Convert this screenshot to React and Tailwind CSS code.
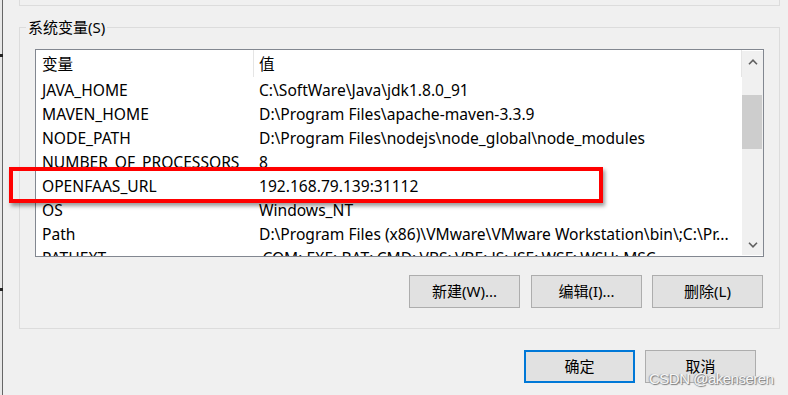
import React from "react";

const rows = [
  ["JAVA_HOME", "C:\\SoftWare\\Java\\jdk1.8.0_91"],
  ["MAVEN_HOME", "D:\\Program Files\\apache-maven-3.3.9"],
  ["NODE_PATH", "D:\\Program Files\\nodejs\\node_global\\node_modules"],
  ["NUMBER_OF_PROCESSORS", "8"],
  ["OPENFAAS_URL", "192.168.79.139:31112"],
  ["OS", "Windows_NT"],
  ["Path", "D:\\Program Files (x86)\\VMware\\VMware Workstation\\bin\\;C:\\Pr..."],
  ["PATHEXT", ".COM;.EXE;.BAT;.CMD;.VBS;.VBE;.JS;.JSE;.WSF;.WSH;.MSC"],
];

function Btn({ children, primary }) {
  return (
    <button
      className={
        "w-[111px] h-[33px] bg-[#e1e1e1] flex items-center justify-center text-[15px] text-black " +
        (primary ? "border-2 border-[#0078d7]" : "border border-[#adadad]")
      }
    >
      {children}
    </button>
  );
}

export default function App() {
  return (
    <div className="relative w-[788px] h-[395px] overflow-hidden bg-[#f0f0f0] font-['Noto_Sans','Noto_Sans_CJK_SC',sans-serif] text-[15px] text-black flex">
      <div className="w-[2px] h-full bg-[#e8e8e8]" />
      <div className="w-[1px] h-full bg-[#666666]" />
      <div className="flex flex-col pl-[16px]">
        <div className="w-[761px] h-[6px] border-x border-b border-[#dcdcdc]" />
        <fieldset className="mt-[11px] w-[761px] h-[312px] border border-[#dcdcdc] p-0 m-0 min-w-0">
          <legend className="ml-[6px] px-[2px] leading-[20px]">系统变量(S)</legend>
          <div className="px-[15px] pt-[12px]">
            <div className="w-[729px] h-[208px] border border-[#828790] bg-white flex">
              <div className="flex-1 flex flex-col overflow-hidden text-[15.6px] leading-[20px]">
                <div className="h-[27px] flex shrink-0">
                  <div className="w-[218px] h-full pl-[6px] border-r border-[#e5e5e5] flex items-center">变量</div>
                  <div className="flex-1 h-full pl-[5px] border-r border-[#e5e5e5] flex items-center">值</div>
                </div>
                {rows.map(([k, v]) => (
                  <div key={k} className="h-[24px] pt-[1px] flex items-center shrink-0 whitespace-nowrap">
                    <div className="w-[218px] pl-[6px] overflow-hidden">{k}</div>
                    <div className="flex-1 pl-[5px] overflow-hidden">{v}</div>
                  </div>
                ))}
              </div>
              <div className="w-[21px] my-[1px] bg-[#f0f0f0] flex flex-col">
                <div className="h-[21px] flex items-center justify-center">
                  <svg width="10" height="6" viewBox="0 0 10 6">
                    <polyline points="1,5.2 5,1.2 9,5.2" fill="none" stroke="#606060" strokeWidth="1.6" />
                  </svg>
                </div>
                <div className="h-[23px]" />
                <div className="h-[54px] bg-[#cdcdcd] mr-[1px]" />
                <div className="flex-1" />
                <div className="h-[21px] flex items-center justify-center">
                  <svg width="10" height="6" viewBox="0 0 10 6">
                    <polyline points="1,0.8 5,4.8 9,0.8" fill="none" stroke="#606060" strokeWidth="1.6" />
                  </svg>
                </div>
              </div>
            </div>
            <div className="mt-[18px] pr-[1px] flex justify-end">
              <Btn>新建(W)...</Btn>
              <div className="w-[11px]" />
              <Btn>编辑(I)...</Btn>
              <div className="w-[10px]" />
              <Btn>删除(L)</Btn>
            </div>
          </div>
        </fieldset>
        <div className="mt-[21px] w-[737px] flex justify-end gap-[10px]">
          <Btn primary>确定</Btn>
          <Btn>取消</Btn>
        </div>
      </div>

      {/* annotation overlay */}
      <div className="absolute left-[9px] top-[167px] w-[594px] h-[36px] border-4 border-[#ff0000] shadow-[2px_3px_4px_rgba(0,0,0,0.4)]" />
      {/* window-edge ticks */}
      <div className="absolute left-0 top-[54px] w-[3px] h-[3px] bg-[#222222]" />
      <div className="absolute left-0 top-[288px] w-[3px] h-[3px] bg-[#222222]" />
      {/* watermark */}
      <div className="absolute left-[649px] top-[369px] leading-[20px] text-[15px] tracking-[-0.5px] font-['Liberation_Sans',Arial,sans-serif] text-[#f6f6f6] [text-shadow:1px_1px_1px_#7a7a7a,-1px_0_1px_#a0a0a0]">
        CSDN @akenseren
      </div>
    </div>
  );
}
